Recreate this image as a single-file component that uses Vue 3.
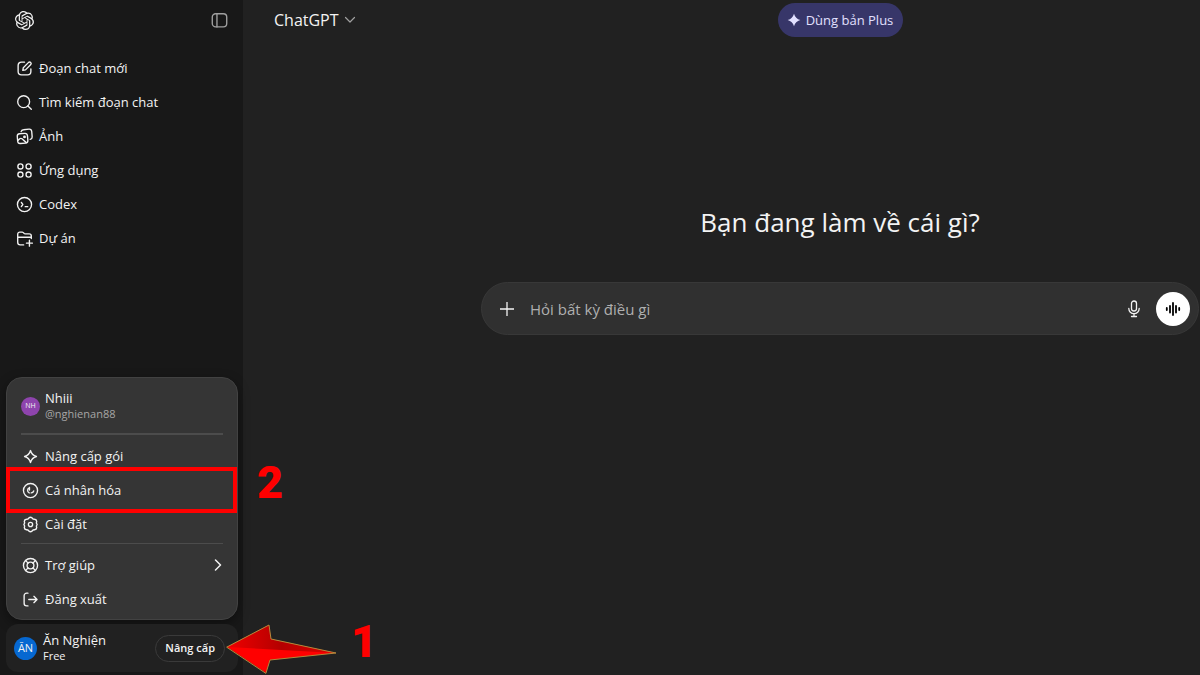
<script setup>
const nav = [
  { id: 'edit', label: 'Đoạn chat mới' },
  { id: 'search', label: 'Tìm kiếm đoạn chat' },
  { id: 'images', label: 'Ảnh' },
  { id: 'apps', label: 'Ứng dụng' },
  { id: 'codex', label: 'Codex' },
  { id: 'folder', label: 'Dự án' },
]
const icons = {
  edit: '<path d="M10 2.500H6.500A4 4 0 0 0 2.500 6.500v7A4 4 0 0 0 6.500 17.500h7A4 4 0 0 0 17.500 13.500V10.500"/><path d="M8 12.200l.6-3.200 6.200-6.200a1.850 1.850 0 0 1 2.600 2.600l-6.200 6.200z"/>',
  search: '<circle cx="9" cy="9" r="7"/><path d="M14 14 18 18"/>',
  images: '<rect x="1.700" y="6.500" width="12" height="11.500" rx="3" transform="rotate(-5 8 12)"/><path d="M6 4.300A3 3 0 0 1 8.800 2l6.500-.6a3 3 0 0 1 3.200 2.700l.5 6a3 3 0 0 1-2.300 3.200"/><circle cx="10" cy="10.500" r=".9"/><path d="m2.500 14.500 1.900-1.800q1.300-1.100 2.700 0l5 4.500"/>',
  apps: '<circle cx="5.200" cy="5.200" r="3"/><circle cx="14.800" cy="5.200" r="3"/><circle cx="5.200" cy="14.800" r="3"/><circle cx="14.800" cy="14.800" r="3"/>',
  codex: '<circle cx="10" cy="10" r="8.300"/><path d="m6.300 7.500 1.700 2.500-1.700 2.500M10.800 12.500h3"/>',
  folder: '<path d="M9 17.500H5A3 3 0 0 1 2 14.500V5a2.500 2.500 0 0 1 2.500-2.500h2.700q.8 0 1.400.6l.8.800q.5.600 1.400.600H15.500a2.500 2.500 0 0 1 2.500 2.500V10M2 8.500h16M15.800 12v7M12.300 15.500h7"/>',
  spark: '<path d="M10 3Q11.500 8.500 17 10 11.500 11.500 10 17 8.500 11.500 3 10 8.500 8.500 10 3Z"/>',
  personal: '<circle cx="10" cy="10" r="8.300"/><path d="M8.800 6.500c-2.800 1.200-3 5-.3 6.400M8.800 6.500v3M10.800 12.800q2.300-.2 3-2.300"/>',
  gear: '<path d="M8.200 2.200Q10 .9 11.800 2.200L13 3.500 14.800 3.800Q17.100 4 17.300 6.300L16.900 8.200 17.800 10 16.900 11.800 17.300 13.700Q17.100 16 14.800 16.200L13 16.500 11.800 17.800Q10 19.100 8.200 17.800L7 16.500 5.200 16.200Q2.900 16 2.700 13.700L3.100 11.800 2.200 10 3.100 8.200 2.700 6.300Q2.900 4 5.200 3.800L7 3.500Z"/><circle cx="10" cy="10" r="2.500"/>',
  help: '<circle cx="10" cy="10" r="8.300"/><circle cx="10" cy="10" r="4"/><path d="m4.200 4.200 3 3m5.600 5.600 3 3m0-11.600-3 3m-5.600 5.600-3 3"/>',
  logout: '<path d="M7 2.500H5.500A3 3 0 0 0 2.500 5.500v9a3 3 0 0 0 3 3H7M8 10h9.500M14 6.300l3.700 3.700-3.700 3.700"/>',
}
</script>

<template>
  <div class="app">
    <aside class="sidebar">
      <header class="side-head">
        <a href="#" aria-label="ChatGPT">
          <svg class="logo" viewBox="0 0 24 24"><path d="M22.2819 9.8211a5.9847 5.9847 0 0 0-.5157-4.9108 6.0462 6.0462 0 0 0-6.5098-2.9A6.0651 6.0651 0 0 0 4.9807 4.1818a5.9847 5.9847 0 0 0-3.9977 2.9 6.0462 6.0462 0 0 0 .7427 7.0966 5.98 5.98 0 0 0 .511 4.9107 6.051 6.051 0 0 0 6.5146 2.9001A5.9847 5.9847 0 0 0 13.2599 24a6.0557 6.0557 0 0 0 5.7718-4.2058 5.9894 5.9894 0 0 0 3.9977-2.9001 6.0557 6.0557 0 0 0-.7475-7.0729zm-9.022 12.6081a4.4755 4.4755 0 0 1-2.8764-1.0408l.1419-.0804 4.7783-2.7582a.7948.7948 0 0 0 .3927-.6813v-6.7369l2.02 1.1686a.071.071 0 0 1 .038.052v5.5826a4.504 4.504 0 0 1-4.4945 4.4944zm-9.6607-4.1254a4.4708 4.4708 0 0 1-.5346-3.0137l.142.0852 4.783 2.7582a.7712.7712 0 0 0 .7806 0l5.8428-3.3685v2.3324a.0804.0804 0 0 1-.0332.0615L9.74 19.9502a4.4992 4.4992 0 0 1-6.1408-1.6464zM2.3408 7.8956a4.485 4.485 0 0 1 2.3655-1.9728V11.6a.7664.7664 0 0 0 .3879.6765l5.8144 3.3543-2.0201 1.1685a.0757.0757 0 0 1-.071 0l-4.8303-2.7865A4.504 4.504 0 0 1 2.3408 7.872zm16.5963 3.8558L13.1038 8.364 15.1192 7.2a.0757.0757 0 0 1 .071 0l4.8303 2.7913a4.4944 4.4944 0 0 1-.6765 8.1042v-5.6772a.79.79 0 0 0-.407-.667zm2.0107-3.0231l-.142-.0852-4.7735-2.7818a.7759.7759 0 0 0-.7854 0L9.409 9.2297V6.8974a.0662.0662 0 0 1 .0284-.0615l4.8303-2.7866a4.4992 4.4992 0 0 1 6.6802 4.66zM8.3065 12.863l-2.02-1.1638a.0804.0804 0 0 1-.038-.0567V6.0742a4.4992 4.4992 0 0 1 7.3757-3.4537l-.142.0805L8.704 5.459a.7948.7948 0 0 0-.3927.6813zm1.0976-2.3654l2.602-1.4998 2.6069 1.4998v2.9994l-2.5974 1.4997-2.6067-1.4997Z" /></svg>
        </a>
        <button class="collapse" aria-label="Đóng thanh bên">
          <svg class="icon" viewBox="0 0 20 20"><rect x="1.500" y="2" width="17" height="15.500" rx="4" /><path d="M7 2v15.500" /></svg>
        </button>
      </header>

      <nav class="nav">
        <a v-for="n in nav" :key="n.id" href="#" class="nav-row">
          <svg class="icon" viewBox="0 0 20 20" v-html="icons[n.id]"></svg>
          <span>{{ n.label }}</span>
        </a>
      </nav>

      <div class="account">
        <div class="menu">
          <button class="profile">
            <span class="avatar small">NH</span>
            <span class="who"><b>Nhiii</b><small>@nghienan88</small></span>
          </button>
          <hr class="thick" />
          <button class="menu-row"><svg class="icon" viewBox="0 0 20 20" v-html="icons.spark"></svg>Nâng cấp gói</button>
          <button class="menu-row marked">
            <svg class="icon" viewBox="0 0 20 20" v-html="icons.personal"></svg>Cá nhân hóa
            <span class="step two">2</span>
          </button>
          <button class="menu-row"><svg class="icon" viewBox="0 0 20 20" v-html="icons.gear"></svg>Cài đặt</button>
          <hr />
          <button class="menu-row">
            <svg class="icon" viewBox="0 0 20 20" v-html="icons.help"></svg>Trợ giúp
            <svg class="chev" viewBox="0 0 8 12"><path d="M1.500 1 6.500 6 1.500 11" /></svg>
          </button>
          <button class="menu-row"><svg class="icon" viewBox="0 0 20 20" v-html="icons.logout"></svg>Đăng xuất</button>
        </div>

        <div class="user">
          <span class="avatar">ĂN</span>
          <span class="name">Ăn Nghiện<small>Free</small></span>
          <button class="upgrade">Nâng cấp</button>
          <svg class="arrow" viewBox="0 0 112 50">
            <defs><linearGradient id="shade" x1="0" x2="1"><stop offset="0" stop-color="#f00000" /><stop offset=".5" stop-color="#b40000" /><stop offset="1" stop-color="#e00000" /></linearGradient></defs>
            <path class="body" d="M1 23 43 1 45 15 110 29 44 36 40 49Z" />
            <path class="shade" d="M1 23 43 1 45 15 110 29Z" fill="url(#shade)" />
            <path class="edge" d="M1 23 43 1 45 15 110 29 44 36 40 49Z" />
          </svg>
          <span class="step one">1</span>
        </div>
      </div>
    </aside>

    <main class="main">
      <header class="top">
        <button class="model">ChatGPT<svg viewBox="0 0 12 8"><path d="M1.500 1.500 6 6l4.500-4.500" /></svg></button>
        <div class="promo">
          <button class="plus"><svg viewBox="0 0 20 20"><path d="M10 1Q12 8 19 10 12 12 10 19 8 12 1 10 8 8 10 1Z" /></svg>Dùng bản Plus</button>
        </div>
      </header>

      <section class="center">
        <h1>Bạn đang làm về cái gì?</h1>
        <form class="composer" @submit.prevent>
          <button type="button" aria-label="Thêm"><svg class="add" viewBox="0 0 14 14"><path d="M7 0v14M0 7h14" /></svg></button>
          <input type="text" placeholder="Hỏi bất kỳ điều gì" aria-label="Hỏi bất kỳ điều gì" />
          <button type="button" aria-label="Đọc chính tả">
            <svg class="mic" viewBox="0 0 14 18"><rect x="4.500" y="1" width="5" height="10" rx="2.500" /><path d="M1.800 8.500a5.200 5.200 0 0 0 10.400 0M7 13.700v2.800M4.500 16.500h5" /></svg>
          </button>
          <button type="button" class="voice" aria-label="Giọng nói">
            <svg viewBox="0 0 16 16"><path d="M1.800 7v2M5 5v6.500M8 2v12M11 5v6.500M14.200 7v2" /></svg>
          </button>
        </form>
      </section>
    </main>
  </div>
</template>

<style>
body { margin: 0; background: #212121; }
</style>

<style scoped>
* { box-sizing: border-box; }
.app {
  display: flex;
  min-height: 100vh;
  overflow: hidden;
  color: #f3f3f3;
  font-family: "Open Sans", "Noto Sans", sans-serif;
  font-size: 13px;
  line-height: 18px;
}
button { padding: 0; border: 0; background: none; color: inherit; font: inherit; text-align: left; cursor: pointer; }
a { color: inherit; text-decoration: none; }
svg { display: block; flex: none; fill: none; stroke: currentColor; stroke-linecap: round; stroke-linejoin: round; }
.icon { width: 17px; height: 17px; stroke-width: 1.6; }

.sidebar { display: flex; flex-direction: column; flex: 0 0 243px; background: #181818; z-index: 1; }
.side-head { display: flex; align-items: center; justify-content: space-between; height: 40px; padding: 0 15px; }
.logo { width: 19px; height: 19px; fill: #f3f3f3; stroke: none; }
.collapse { color: #a0a0a0; }
.nav { padding-top: 11px; }
.nav-row { display: flex; align-items: center; gap: 6px; height: 34px; padding: 0 16px; }

.account { display: flex; flex-direction: column; gap: 4px; margin-top: auto; padding: 20px 5px 3px 6px; }
.menu { display: flex; flex-direction: column; padding: 3px 0 3px; border: 1px solid #424242; border-radius: 16px; background: #353535; box-shadow: 0 4px 12px #0006; }
.profile { display: flex; align-items: center; gap: 5px; height: 50px; padding: 0 14px; }
.avatar { display: grid; place-items: center; flex: none; width: 23px; height: 23px; border-radius: 50%; background: #0668d1; font-size: 11px; }
.avatar.small { width: 19px; height: 19px; background: #8e44ad; font-size: 7px; }
.who { display: grid; line-height: 16px; }
.who b { font-weight: 500; }
small { font-size: 11px; }
.who small { color: #a6a6a6; }
hr { width: calc(100% - 28px); height: 1px; margin: 2px 14px 4px; border: 0; background: #4c4c4c; }
hr.thick { height: 2px; margin: 2px 14px 4px; }
.menu-row { position: relative; display: flex; align-items: center; gap: 6px; height: 34px; padding: 0 15px; }
.chev { width: 8px; height: 12px; margin-left: auto; stroke-width: 1.5; }
.marked::after { content: ""; position: absolute; inset: -6px 0 -6px -1px; border: 4px solid #f00; z-index: 1; }
.step { position: absolute; color: #f00; font: 900 45px/45px Roboto, sans-serif; }
.two { left: 250px; top: -13px; }

.user { position: relative; display: flex; align-items: center; gap: 6px; height: 48px; padding: 0 13px 0 8px; border-radius: 12px; background: #212121; }
.name { display: grid; flex: 1; line-height: 16px; }
.upgrade { height: 27px; padding: 0 9px; border: 1px solid #3a3a3a; border-radius: 14px; font-size: 11px; font-weight: 600; }
.arrow { position: absolute; left: 220px; top: 0; width: 112px; height: 50px; }
.arrow .body { fill: #f00; stroke: none; }
.arrow .shade { stroke: none; }
.arrow .edge { stroke: #b08a3c; stroke-width: 1; }
.one { left: 345px; top: -5px; }

.main { flex: 1; min-width: 0; }
.top { display: flex; align-items: center; height: 40px; }
.model { display: flex; align-items: center; gap: 5px; width: 207px; margin-left: 31px; font-size: 16px; }
.model svg { width: 12px; height: 8px; color: #a0a0a0; stroke-width: 1.2; }
.promo { display: flex; flex: 1; justify-content: center; }
.plus { display: flex; align-items: center; gap: 5px; height: 34px; padding: 0 10px 0 9px; border-radius: 17px; background: #373669; color: #e2e0ff; font-weight: 500; }
.plus svg { width: 14px; height: 14px; fill: currentColor; stroke: none; }
.center { padding: 163px 1px 0 238px; }
h1 { margin: 0; font-size: 26px; font-weight: 400; line-height: 38px; text-align: center; }
.composer { display: flex; align-items: center; height: 53px; margin-top: 41px; padding: 0 8px 0 18px; border: 1px solid #383838; border-radius: 27px; background: #303030; }
.add { width: 14px; height: 14px; stroke-width: 1.3; }
input { flex: 1; min-width: 0; height: 32px; padding: 0 16px; border: 0; outline: 0; background: none; color: #f3f3f3; font: inherit; font-size: 15px; line-height: 24px; }
input::placeholder { color: #afafaf; opacity: 1; }
.mic { width: 14px; height: 18px; stroke-width: 1.3; }
.voice { display: grid; place-items: center; width: 34px; height: 34px; margin-left: 15px; border-radius: 50%; background: #fff; color: #000; }
.voice svg { width: 16px; height: 16px; stroke-width: 1.8; }
</style>
